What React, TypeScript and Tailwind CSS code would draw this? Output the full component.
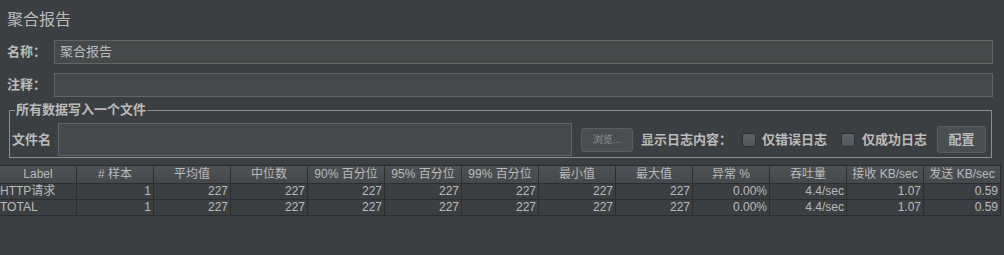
import React from "react";

const cols = ["Label", "# 样本", "平均值", "中位数", "90% 百分位", "95% 百分位", "99% 百分位", "最小值", "最大值", "异常 %", "吞吐量", "接收 KB/sec", "发送 KB/sec"];
const rows = [
  ["HTTP请求", "1", "227", "227", "227", "227", "227", "227", "227", "0.00%", "4.4/sec", "1.07", "0.59"],
  ["TOTAL", "1", "227", "227", "227", "227", "227", "227", "227", "0.00%", "4.4/sec", "1.07", "0.59"],
];

const font = { fontFamily: '"Liberation Sans", "Noto Sans CJK SC", sans-serif' };

function Checkbox() {
  return <span className="inline-block w-[14px] h-[14px] rounded-[2px] border border-[#2f3234] bg-gradient-to-b from-[#5f6264] to-[#535658]" />;
}

export default function App() {
  return (
    <div className="w-[1004px] h-[255px] bg-[#3c3f41] text-[#bbbbbb] overflow-hidden flex flex-col" style={font}>
      <div className="mt-[9px] h-[22px] leading-[22px] text-[16px] pl-[7px]">聚合报告</div>
      <div className="mt-[9px] flex items-center h-[24px]">
        <div className="w-[54px] pl-[7px] text-[13px] font-bold">名称：</div>
        <div className="w-[939px] h-[24px] border border-[#646464] bg-[#45494a] text-[13px] leading-[22px] pl-[5px]">聚合报告</div>
      </div>
      <div className="mt-[9px] flex items-center h-[24px]">
        <div className="w-[54px] pl-[7px] text-[13px] font-bold">注释：</div>
        <div className="w-[939px] h-[24px] border border-[#646464] bg-[#45494a]" />
      </div>
      <fieldset className="ml-[9px] w-[983px] mt-[6px] border border-[#8e8e8e] pl-[2px] pr-[5px] pb-[1px] flex">
        <legend className="ml-[3px] px-[1px] text-[13px] font-bold leading-[14px]">所有数据写入一个文件</legend>
        <div className="flex items-center w-full pt-[6px]">
          <div className="w-[46px] text-[13px] font-bold">文件名</div>
          <div className="w-[514px] h-[33px] border border-[#646464] bg-[#45494a]" />
          <button className="ml-[9px] w-[52px] h-[24px] rounded-[3px] border border-[#5a5d5f] bg-[#4a4e50] text-[10px] text-[#8c8f91]">浏览...</button>
          <div className="ml-[8px] text-[13px] font-bold">显示日志内容：</div>
          <div className="ml-[10px] flex items-center"><Checkbox /></div>
          <div className="ml-[6px] text-[13px] font-bold">仅错误日志</div>
          <div className="ml-[14px] flex items-center"><Checkbox /></div>
          <div className="ml-[7px] text-[13px] font-bold">仅成功日志</div>
          <button className="ml-auto w-[49px] h-[27px] rounded-[3px] border border-[#5a5d5f] bg-[#4a4e50] text-[13px] font-bold text-[#bbbbbb]">配置</button>
        </div>
      </fieldset>
      <div className="mt-[7px] w-[1001px] border-t border-[#2b2d2f]">
        <div className="grid grid-cols-[repeat(13,77px)] h-[18px] bg-gradient-to-b from-[#4d5153] to-[#45494b] border-b border-[#2b2d2f]">
          {cols.map((c, i) => (
            <div key={i} className="border-r border-[#2b2d2f] text-[12px] leading-[17px] text-center whitespace-nowrap overflow-hidden">{c}</div>
          ))}
        </div>
        {rows.map((r, ri) => (
          <div key={ri} className="grid grid-cols-[repeat(13,77px)] h-[16px] border-b border-[#2b2d2f]">
            {r.map((c, i) => (
              <div key={i} className={`border-r border-[#2b2d2f] text-[12px] leading-[15px] whitespace-nowrap overflow-hidden ${i === 0 ? "text-left" : "text-right pr-[2px]"}`}>{c}</div>
            ))}
          </div>
        ))}
      </div>
    </div>
  );
}
